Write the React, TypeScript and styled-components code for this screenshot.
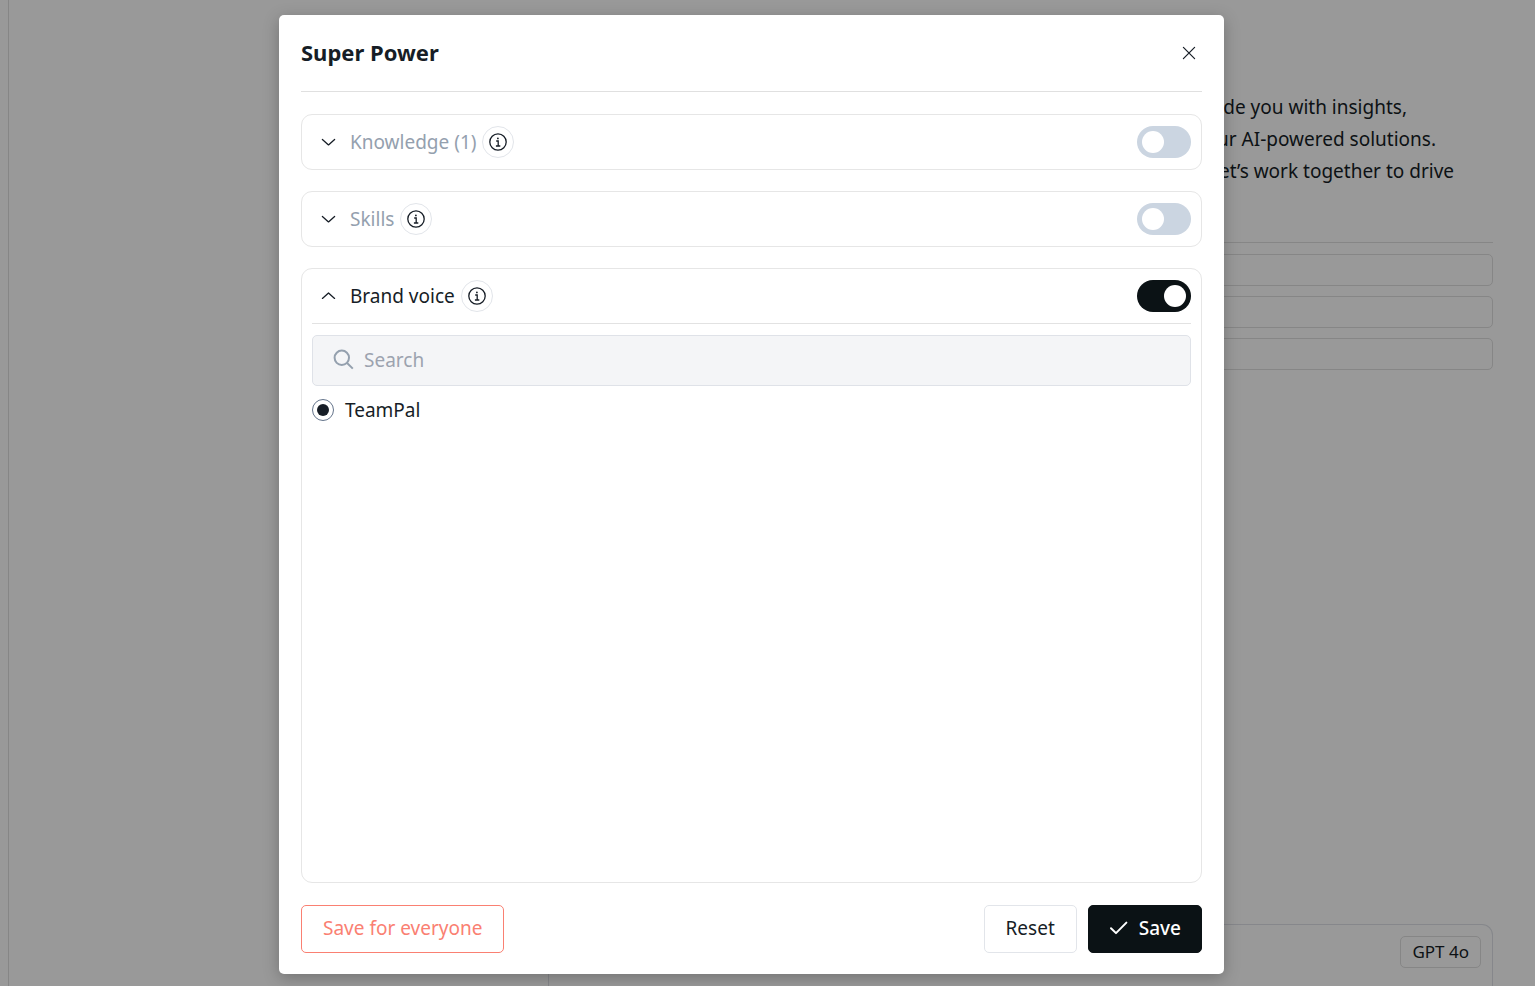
import React, { useState } from "react";
import styled, { createGlobalStyle, css } from "styled-components";

const GlobalStyle = createGlobalStyle`
  *, *::before, *::after { box-sizing: border-box; }
  html, body, #root { height: 100%; }
  body {
    margin: 0;
    overflow: hidden;
    background: #fff;
    color: #161d26;
    font-family: "Noto Sans", "Liberation Sans", sans-serif;
    font-size: 19px;
    line-height: 32px;
  }
  button, input { font: inherit; color: inherit; }
`;

const Page = styled.div`
  position: relative;
  height: 100%;
`;

const Workspace = styled.div`
  display: flex;
  height: 100%;
  padding-left: 8px;
`;

const Chat = styled.main`
  display: flex;
  flex: 1;
  flex-direction: column;
  justify-content: space-between;
  padding: 91px 42px 0 539px;
  border-left: 1px solid #e0e0e0;
`;

const Intro = styled.section`
  display: flex;
  flex-direction: column;
  gap: 11px;
`;

const IntroText = styled.div`
  padding-bottom: 55px;
  border-bottom: 1px solid #e0e0e0;
  text-align: right;
`;

const IntroLine = styled.p<{ $inset: number }>`
  margin: 0;
  padding-right: ${(p) => p.$inset}px;
`;

const Suggestion = styled.div`
  height: 32px;
  border: 1px solid #e0e0e0;
  border-radius: 5px;
`;

const Suggestions = styled.div`
  display: flex;
  flex-direction: column;
  gap: 10px;
`;

const Composer = styled.section`
  display: flex;
  justify-content: flex-end;
  align-items: flex-start;
  height: 62px;
  padding: 11px;
  border: solid #dfe2e8;
  border-width: 1px 1px 0;
  border-radius: 11px 11px 0 0;
`;

const ModelButton = styled.button`
  height: 32px;
  padding: 0 11px;
  border: 1px solid #e0e0e0;
  border-radius: 5px;
  background: none;
  font-size: 17px;
  line-height: 30px;
`;

const Overlay = styled.div`
  position: absolute;
  inset: 0;
  display: flex;
  justify-content: center;
  padding: 15px 32px 12px 0;
  background: rgba(0, 0, 0, 0.4);
`;

const Modal = styled.div`
  display: flex;
  flex-direction: column;
  width: 100%;
  max-width: 945px;
  padding: 22px 22px 21px;
  border-radius: 5px;
  background: #fff;
  box-shadow: 0 4px 16px rgba(0, 0, 0, 0.25);
`;

const ModalHeader = styled.header`
  display: flex;
  align-items: center;
  justify-content: space-between;
  padding-bottom: 22px;
  border-bottom: 1px solid #e0e0e0;
`;

const Title = styled.h1`
  margin: 0;
  padding-bottom: 2px;
  font-size: 22px;
  font-weight: 700;
  line-height: 30px;
`;

const CloseButton = styled.button`
  display: grid;
  place-items: center;
  width: 26px;
  height: 26px;
  padding: 0;
  border: 0;
  background: none;
`;

const Panels = styled.div`
  display: flex;
  flex: 1;
  flex-direction: column;
  gap: 21px;
  padding: 22px 0;
`;

const Panel = styled.section<{ $open: boolean }>`
  padding: 0 10px;
  border: 1px solid #e6e6e6;
  border-radius: 11px;
  ${(p) => p.$open && css`flex: 1;`}
`;

const PanelHeader = styled.div<{ $open: boolean }>`
  display: flex;
  align-items: center;
  gap: 6px;
  height: 54px;
  ${(p) => p.$open && css`
    height: 55px;
    border-bottom: 1px solid #e2e2e2;
  `}
`;

const ExpandButton = styled.button<{ $muted: boolean }>`
  display: flex;
  align-items: center;
  gap: 13px;
  padding: 0 0 0 8px;
  border: 0;
  background: none;
  line-height: 32px;

  span { color: ${(p) => (p.$muted ? "#94a0ae" : "#161d26")}; }
`;

const InfoButton = styled.button`
  display: grid;
  place-items: center;
  width: 32px;
  height: 32px;
  padding: 0;
  border: 1px solid #e2e5ea;
  border-radius: 50%;
  background: none;
`;

const Switch = styled.input`
  display: flex;
  align-items: center;
  width: 54px;
  height: 32px;
  margin: 0 0 0 auto;
  padding: 5px;
  border-radius: 16px;
  background: #cbd5e1;
  appearance: none;

  &::before {
    content: "";
    width: 22px;
    height: 22px;
    border-radius: 50%;
    background: #fff;
  }

  &:checked {
    justify-content: flex-end;
    background: #0b1215;
  }
`;

const PanelBody = styled.div`
  display: flex;
  flex-direction: column;
  gap: 8px;
  padding: 11px 0;
`;

const SearchField = styled.label`
  display: flex;
  align-items: center;
  gap: 10px;
  height: 51px;
  padding: 0 20px 2px;
  border: 1px solid #dfe2e8;
  border-radius: 5px;
  background: #f4f5f7;
`;

const SearchInput = styled.input`
  flex: 1;
  min-width: 0;
  padding: 0;
  border: 0;
  outline: 0;
  background: none;

  &::placeholder { color: #9ca3af; opacity: 1; }
`;

const RadioLabel = styled.label`
  display: flex;
  align-items: center;
  gap: 11px;
  line-height: 32px;
`;

const Radio = styled.input`
  display: grid;
  place-items: center;
  width: 22px;
  height: 22px;
  margin: 0;
  border: 1px solid #64748b;
  border-radius: 50%;
  appearance: none;

  &:checked::before {
    content: "";
    width: 12px;
    height: 12px;
    border-radius: 50%;
    background: #161d26;
  }
`;

const ModalFooter = styled.footer`
  display: flex;
  gap: 11px;
`;

const Button = styled.button<{ $kind: "accent" | "plain" | "primary" }>`
  display: flex;
  align-items: center;
  gap: 11px;
  height: 48px;
  padding: 0 21px 2px;
  border: 1px solid #e2e5ea;
  border-radius: 5px;
  background: #fff;

  ${(p) => p.$kind === "accent" && css`
    margin-right: auto;
    border-color: #fa8072;
    color: #fa8072;
  `}
  ${(p) => p.$kind === "primary" && css`
    padding: 0 20px 2px;
    border-color: #0b1215;
    background: #0b1215;
    color: #fff;
    font-weight: 500;
  `}
`;

const ChevronIcon = ({ up }: { up: boolean }) => (
  <svg width="17" height="16" viewBox="0 0 17 16" fill="none" stroke="#161d26" strokeWidth="1.3" strokeLinecap="round" strokeLinejoin="round" aria-hidden="true">
    <path d={up ? "M2.4 10.4 8.5 4.9l6.1 5.5" : "M2.4 5.4 8.5 10.9l6.1-5.5"} />
  </svg>
);

const InfoIcon = () => (
  <svg width="18" height="18" viewBox="0 0 18 18" fill="none" stroke="#161d26" strokeWidth="1.3" aria-hidden="true">
    <circle cx="9" cy="9" r="8.2" />
    <path d="M7.2 8h2v4.9M6.9 13h4.4" />
    <circle cx="8.9" cy="5.4" r="0.9" fill="#161d26" stroke="none" />
  </svg>
);

const CloseIcon = () => (
  <svg width="14" height="14" viewBox="0 0 14 14" stroke="#161d26" strokeWidth="1.2" strokeLinecap="round" aria-hidden="true">
    <path d="M1.4 1.4l11.2 11.2M12.6 1.4L1.4 12.6" />
  </svg>
);

const SearchIcon = () => (
  <svg width="21" height="21" viewBox="0 0 21 21" fill="none" stroke="#94a0ae" strokeWidth="2" aria-hidden="true">
    <circle cx="8.8" cy="8.8" r="7.2" />
    <path d="M13.8 13.8l6 5.8" />
  </svg>
);

const CheckIcon = () => (
  <svg width="19" height="16" viewBox="0 0 19 16" fill="none" stroke="#fff" strokeWidth="2" strokeLinecap="round" strokeLinejoin="round" aria-hidden="true">
    <path d="M2 8.2l5 4.9L17.4 2.6" />
  </svg>
);

interface PowerPanelProps {
  name: string;
  enabled: boolean;
  onToggle: () => void;
  children?: React.ReactNode;
}

function PowerPanel({ name, enabled, onToggle, children }: PowerPanelProps) {
  const open = Boolean(children);
  return (
    <Panel $open={open}>
      <PanelHeader $open={open}>
        <ExpandButton type="button" $muted={!enabled} aria-expanded={open}>
          <ChevronIcon up={open} />
          <span>{name}</span>
        </ExpandButton>
        <InfoButton type="button" aria-label={`About ${name}`}>
          <InfoIcon />
        </InfoButton>
        <Switch type="checkbox" role="switch" aria-label={name} checked={enabled} onChange={onToggle} />
      </PanelHeader>
      {open && <PanelBody>{children}</PanelBody>}
    </Panel>
  );
}

export default function App() {
  const [enabled, setEnabled] = useState({ knowledge: false, skills: false, voice: true });
  const toggle = (key: keyof typeof enabled) => () =>
    setEnabled((current) => ({ ...current, [key]: !current[key] }));

  return (
    <Page>
      <GlobalStyle />
      <Workspace>
        <Chat>
          <Intro>
            <IntroText>
              <IntroLine $inset={86}>provide you with insights,</IntroLine>
              <IntroLine $inset={57}>our AI-powered solutions.</IntroLine>
              <IntroLine $inset={39}>Let’s work together to drive</IntroLine>
            </IntroText>
            <Suggestions>
              <Suggestion />
              <Suggestion />
              <Suggestion />
            </Suggestions>
          </Intro>
          <Composer>
            <ModelButton type="button">GPT 4o</ModelButton>
          </Composer>
        </Chat>
      </Workspace>
      <Overlay>
        <Modal role="dialog" aria-modal="true" aria-labelledby="power-title">
          <ModalHeader>
            <Title id="power-title">Super Power</Title>
            <CloseButton type="button" aria-label="Close">
              <CloseIcon />
            </CloseButton>
          </ModalHeader>
          <Panels>
            <PowerPanel name="Knowledge (1)" enabled={enabled.knowledge} onToggle={toggle("knowledge")} />
            <PowerPanel name="Skills" enabled={enabled.skills} onToggle={toggle("skills")} />
            <PowerPanel name="Brand voice" enabled={enabled.voice} onToggle={toggle("voice")}>
              <SearchField>
                <SearchIcon />
                <SearchInput type="search" placeholder="Search" aria-label="Search" />
              </SearchField>
              <RadioLabel>
                <Radio type="radio" name="voice" defaultChecked />
                TeamPal
              </RadioLabel>
            </PowerPanel>
          </Panels>
          <ModalFooter>
            <Button type="button" $kind="accent">Save for everyone</Button>
            <Button type="button" $kind="plain">Reset</Button>
            <Button type="button" $kind="primary">
              <CheckIcon />
              Save
            </Button>
          </ModalFooter>
        </Modal>
      </Overlay>
    </Page>
  );
}
